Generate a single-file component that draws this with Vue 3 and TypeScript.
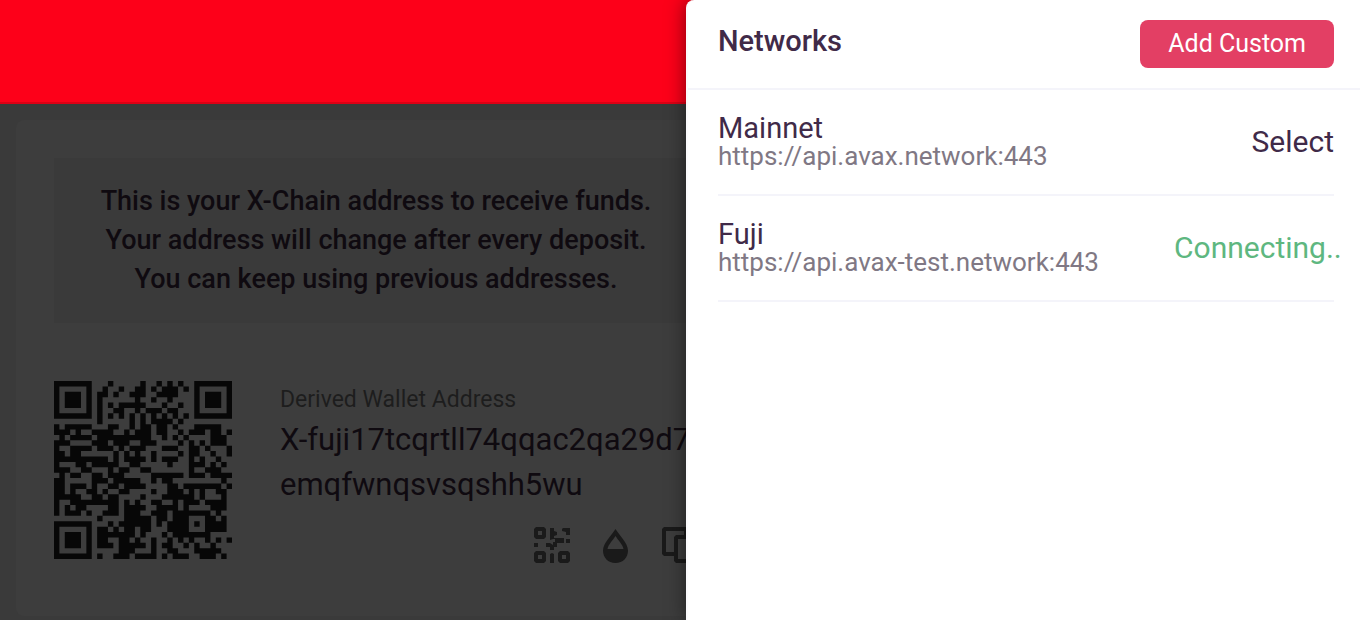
<script setup lang="ts">
interface Network {
  name: string
  url: string
  connecting: boolean
}

const networks: Network[] = [
  { name: 'Mainnet', url: 'https://api.avax.network:443', connecting: false },
  { name: 'Fuji', url: 'https://api.avax-test.network:443', connecting: true },
]

// Dark modules of each row, as column numbers and column ranges
const qrRows: string[] = [
  '0-6 10 16 19 21 23 26-32',
  '0 6 9 12 15-16 18 20-22 24 26 32',
  '0 2-4 6 8-9 11 14-16 19-22 26 28-30 32',
  '0 2-4 6 8 15 18 21 26 28-30 32',
  '0 2-4 6 8 10 12-16 20 23 26 28-30 32',
  '0 6 8 11-12 15 17-19 21-22 26 32',
  '0-6 8 10 12 14 16 18 20 22 24 26-32',
  '8 14 16 18-21 23',
  '0 2-6 10-11 14 16-17 19-20 22 26-30',
  '0-2 4 7-10 13 15-17 19-20 23 25-27 29-30 32',
  '1 3-6 8-17 20 22 24 29-31',
  '0-2 7-9 11-13 16-18 23 25 27 29-31',
  '0 3-6 8-10 12 14-16 20-22 25-26 28 32',
  '0-1 3-4 11 13 15 18 23 25-26 29 32',
  '0-9 11 13-16 18 20-22 25 27 30',
  '0 4-5 7-11 14-15 21 25-27 29 31',
  '0-2 5-6 10 12-13 16-17 25 28-30',
  '1 3-4 7-8 10-12 18-23 25-27 29-32',
  '0-1 7-9 11-15 18 20-21 31',
  '0-1 3-5 7 10-11 13-16 21-22 24-30 32',
  '0-1 3 6-7 9 12-13 18 21-23 25 27 30-31',
  '0-4 7-8 10-11 16 20-25 27 31',
  '0 3-11 13 15 18-19 22 24-26 28-31',
  '0 2 4-5 10-11 13-16 19-22 24 29-31',
  '0 2-4 6 9-11 13-15 18-20 22-28 30',
  '8 13-17 19-20 22-24 28-29 31',
  '0-6 10 12-17 19 21-24 26 28-31',
  '0 6 8-9 11 13-14 16-17 21-24 28-31',
  '0 2-4 6 8-14 16 20 22-28',
  '0 2-4 6 8-9 12-13 15 18 21 23 25 28 30 32',
  '0 2-4 6 8-10 12-16 18 20-21 24 26 29',
  '0 6 12-14 18 21-22 26-30',
  '0-6 8 11-13 15-18 20 22-24 27-29 31',
]

const qrPath: string = qrRows
  .map((row, y) =>
    row
      .split(' ')
      .map((run) => {
        const [from, to = from] = run.split('-').map(Number)
        const width = to - from + 1
        return `M${from} ${y}h${width}v1h-${width}z`
      })
      .join(''),
  )
  .join('')
</script>

<template>
  <div class="app">
    <header class="banner"></header>
    <main class="wallet">
      <section class="card">
        <p class="notice">
          This is your X-Chain address to receive funds.<br />
          Your address will change after every deposit.<br />
          You can keep using previous addresses.
        </p>
        <div class="receive">
          <svg class="qr" viewBox="0 0 33 33" role="img" aria-label="Address QR code">
            <path :d="qrPath" />
          </svg>
          <div class="details">
            <h2 class="label">Derived Wallet Address</h2>
            <p class="address">X-fuji17tcqrtll74qqac2qa29d7<br />emqfwnqsvsqshh5wu</p>
            <div class="actions">
              <button type="button" aria-label="Show QR code">
                <svg width="36" height="36" viewBox="0 0 36 36">
                  <path
                    fill-rule="evenodd"
                    d="M2 0h8l2 2v8l-2 2H2l-2-2V2zM4 4v4h4V4zM2 24h8l2 2v8l-2 2H2l-2-2v-8zM4 28v4h4v-4zM26 24h8l2 2v8l-2 2h-8l-2-2v-8zM28 28v4h4v-4z"
                  />
                  <path
                    d="M16 1h4v3l3 1v3l-3 1v2h10v5h-7v4h-3v3h-4v-3h-4v-4h4l3 2v-3h2v-3h-2l-3 1zM28 2l1-1h7v7h-4V5l-4-1zM32 12h4v4h-4zM0 16h4v4H0zM16 27l2-1 2 1v9h-4z"
                  />
                </svg>
              </button>
              <button type="button" aria-label="Faucet">
                <svg width="26" height="36" viewBox="0 0 26 36">
                  <path
                    fill-rule="evenodd"
                    d="M12.500 2C16 8 25 16 25 23.500C25 30.500 20 36 12.500 36S0 30.500 0 23.500C0 16 9 8 12.500 2zM4.500 22h16C20 18 15 13 12.500 9C10 13 5 18 4.500 22z"
                  />
                </svg>
              </button>
              <button type="button" aria-label="Copy address">
                <svg width="36" height="36" viewBox="0 0 36 36">
                  <path
                    fill-rule="evenodd"
                    d="M2 0h22l2 2v6h8l2 2v24l-2 2H14l-2-2v-5H2l-2-2V2zM4 4v21h8V10l2-2h8V4zM16 12v20h16V12z"
                  />
                </svg>
              </button>
            </div>
          </div>
        </div>
      </section>
    </main>

    <aside class="drawer">
      <header class="drawer-head">
        <h1>Networks</h1>
        <button type="button" class="add">Add Custom</button>
      </header>
      <ul class="networks">
        <li v-for="network in networks" :key="network.name" class="network">
          <div>
            <h2 class="name">{{ network.name }}</h2>
            <p class="url">{{ network.url }}</p>
          </div>
          <span v-if="network.connecting" class="status">Connecting..</span>
          <button v-else type="button" class="select">Select</button>
        </li>
      </ul>
    </aside>
  </div>
</template>

<style>
body {
  margin: 0;
}
</style>

<style scoped>
.app {
  position: relative;
  display: flex;
  flex-direction: column;
  min-height: 100vh;
  overflow: hidden;
  background: #3a3a3a;
  color: #0f0a10;
  font-family: Roboto, "Liberation Sans", sans-serif;
}

h1,
h2,
p,
ul {
  margin: 0;
  padding: 0;
}

button {
  padding: 0;
  border: 0;
  background: none;
  font: inherit;
  cursor: pointer;
}

.banner {
  height: 102px;
  border-bottom: 2px solid #dc0015;
  background: #fd0019;
}

.wallet {
  display: flex;
  flex: 1;
  padding: 16px 16px 4px;
}

.card {
  box-sizing: border-box;
  width: 720px;
  padding: 38px 38px 32px;
  border-radius: 8px;
  background: #3d3d3d;
}

.notice {
  padding: 24px 0;
  background: #3a3a3a;
  font-size: 27px;
  font-weight: 500;
  line-height: 39px;
  text-align: center;
}

.receive {
  display: flex;
  gap: 48px;
  margin-top: 58px;
}

.qr {
  flex: none;
  width: 178px;
  height: 178px;
  fill: #070707;
}

.details {
  flex: 1;
  padding-top: 6px;
}

.label {
  color: #1d1d1d;
  font-size: 23px;
  font-weight: 400;
  line-height: 26px;
}

.address {
  padding-top: 4px;
  font-size: 31px;
  line-height: 45px;
  white-space: nowrap;
}

.actions {
  display: flex;
  justify-content: flex-end;
  gap: 33px;
  padding-top: 20px;
}

.actions svg {
  display: block;
  fill: #1a1a1a;
}

.drawer {
  position: absolute;
  top: 0;
  right: 0;
  bottom: 0;
  box-sizing: border-box;
  width: 674px;
  max-width: 100%;
  border-left: 2px solid #fbfbfd;
  border-top-left-radius: 8px;
  background: #fff;
  box-shadow: 0 0 20px rgba(0, 0, 0, 0.5);
  color: #402a48;
}

.drawer-head {
  display: flex;
  align-items: flex-start;
  justify-content: space-between;
  padding: 20px 26px 20px 30px;
  border-bottom: 2px solid #f4f4fa;
}

.drawer-head h1 {
  font-size: 29px;
  font-weight: 500;
  line-height: 42px;
}

.add {
  padding: 0 28px;
  border-radius: 8px;
  background: #e33f64;
  color: #fff;
  font-size: 25px;
  line-height: 48px;
}

.networks {
  padding: 0 26px 0 30px;
  list-style: none;
}

.network {
  display: flex;
  align-items: center;
  justify-content: space-between;
  padding: 24px 0;
  border-bottom: 2px solid #f4f4fa;
}

.name {
  font-size: 29px;
  font-weight: 400;
  line-height: 28px;
}

.url {
  color: #807884;
  font-size: 26px;
  line-height: 28px;
}

.select,
.status {
  color: #402a48;
  font-size: 30px;
  line-height: 34px;
}

.status {
  width: 160px;
  color: #5eb780;
  white-space: nowrap;
}
</style>
